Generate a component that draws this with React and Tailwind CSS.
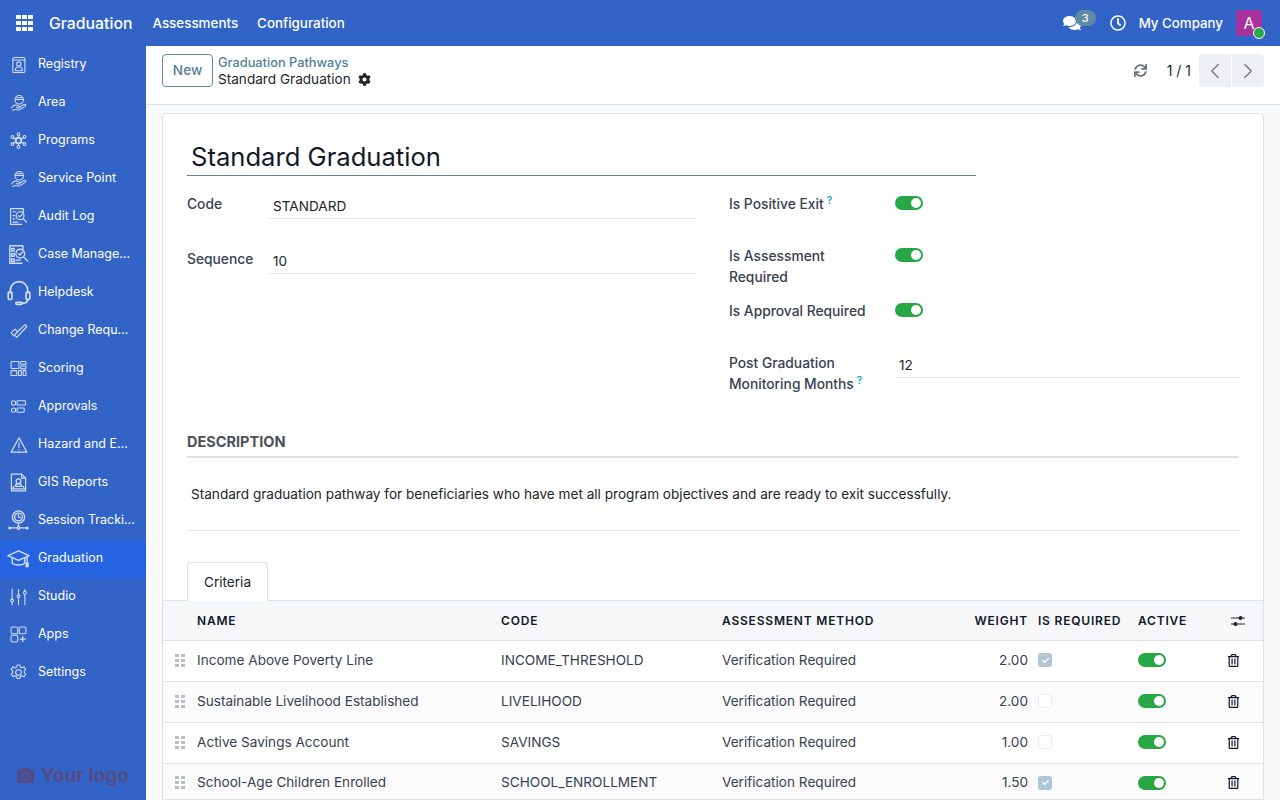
import { ChevronLeft, ChevronRight } from "lucide-react";
import { FaCamera, FaCheck, FaCog, FaComments, FaRegClock, FaRegTrashAlt, FaSync } from "react-icons/fa";

function Line({ w = 24, h = 24, children }) {
  return (
    <svg width={w} height={h} viewBox="0 0 24 24" fill="none" stroke="#d3dff7" strokeWidth="1.500" strokeLinecap="round" strokeLinejoin="round">
      {children}
    </svg>
  );
}

const HandIcon = () => (
  <Line w={17} h={18}>
    <circle cx="13" cy="7.500" r="6" />
    <path d="M7.500 7h11M9 4.500h8" />
    <path d="M2 19c2-3 4-5 7-4l4 1.500c2 .5 1.500 3-1 2.500l-3-.5M15 17l5-3c2-1 3 1 1.500 2.500L15 21c-3 1.500-6 1-8 0l-3 1.500" />
  </Line>
);

const icons = {
  Registry: (
    <Line w={17} h={18}>
      <rect x="4" y="1.500" width="17" height="21" rx="1.500" />
      <path d="M4 5h17" />
      <circle cx="12.500" cy="10.500" r="3" />
      <path d="M7.500 20c0-4 2-5.500 5-5.500s5 1.500 5 5.500z" />
    </Line>
  ),
  Area: <HandIcon />,
  Programs: (
    <Line w={17} h={17}>
      <circle cx="12" cy="12" r="4" strokeWidth="2.500" />
      <circle cx="12" cy="3" r="2" />
      <circle cx="12" cy="21" r="2" />
      <circle cx="3.500" cy="7" r="2" />
      <circle cx="20.500" cy="7" r="2" />
      <circle cx="3.500" cy="17" r="2" />
      <circle cx="20.500" cy="17" r="2" />
      <path d="M12 5v3M12 16v3M5 8l4 2M19 8l-4 2M5 16l4-2M19 16l-4-2" />
    </Line>
  ),
  "Service Point": <HandIcon />,
  "Audit Log": (
    <Line w={19} h={19}>
      <path d="M18 7V2H2v20h14" />
      <path d="M5 6h3M5 11h2M5 15h2M5 19h6" />
      <circle cx="14" cy="11" r="5" />
      <path d="M12 11l1.500 1.500L17 9M18 15l4 4" />
    </Line>
  ),
  "Case Management": (
    <Line w={21} h={21}>
      <path d="M17 6V2H2v20h14" />
      <rect x="4" y="5" width="3" height="3" />
      <rect x="4" y="11" width="3" height="3" />
      <rect x="4" y="17" width="3" height="3" />
      <path d="M9 18.500h5" />
      <circle cx="14" cy="11" r="5" />
      <path d="M12 11l1.500 1.500L17 9M18 15l4.500 4.500" />
    </Line>
  ),
  Helpdesk: (
    <Line w={26} h={26}>
      <path d="M4 12V9.500a8 8 0 0 1 16 0V12" />
      <rect x="2" y="11" width="3.500" height="7" rx="1.700" />
      <rect x="18.500" y="11" width="3.500" height="7" rx="1.700" />
      <path d="M20 18c0 2.500-2 3.500-5 3.500" />
      <rect x="9" y="20.500" width="6" height="2" rx="1" />
    </Line>
  ),
  "Change Requests": (
    <Line w={18} h={18}>
      <path d="M1.500 14.500l5-5 3.500 3.500-5 5.500zM10 13L20 3.500l2.500 2.500L9 20.500l-2-2" />
    </Line>
  ),
  Scoring: (
    <Line w={17} h={17}>
      <rect x="1.500" y="2" width="11" height="10" rx="1" />
      <rect x="15" y="2" width="7.500" height="4" rx="1" />
      <rect x="15" y="8.500" width="7.500" height="4" rx="1" />
      <rect x="1.500" y="15" width="8" height="7" rx="1" />
      <rect x="12" y="15" width="4" height="7" rx="1" />
      <rect x="18.500" y="15" width="4" height="7" rx="1" />
    </Line>
  ),
  Approvals: (
    <Line w={17} h={17}>
      <circle cx="5" cy="7" r="3" />
      <circle cx="5" cy="17" r="3" />
      <rect x="10" y="4" width="12" height="6" rx="1" />
      <rect x="10" y="14" width="10" height="6" rx="1" />
    </Line>
  ),
  "Hazard and Emergency": (
    <Line w={18} h={18}>
      <path d="M12 2.500L1.500 21.500h21z" />
      <path d="M12 9v6.500M12 18v.5" />
    </Line>
  ),
  "GIS Reports": (
    <Line w={19} h={23}>
      <path d="M3 1.500h13l5 5v16H3z" />
      <path d="M16 1.500v5h5" />
      <circle cx="12" cy="10.500" r="3" />
      <path d="M8 17c0-2.500 1.500-3.500 4-3.500s4 1 4 3.500zM6 17l-1.500 3h15L18 17" />
    </Line>
  ),
  "Session Tracking": (
    <Line w={21} h={23}>
      <circle cx="12" cy="8" r="7" />
      <circle cx="12" cy="8" r="4.500" />
      <path d="M12 5.500V8l2 1M12 15v4" />
      <path d="M2 20.500h20" />
      <circle cx="2" cy="20.500" r="1" fill="#d3dff7" />
      <circle cx="12" cy="20.500" r="1.500" fill="#3263c6" />
      <circle cx="22" cy="20.500" r="1" fill="#d3dff7" />
    </Line>
  ),
  Graduation: (
    <Line w={23} h={23}>
      <path d="M12 4L1 9l11 5 11-5z" />
      <path d="M5.500 11.500V17c3 2.500 10 2.500 13 0v-5.500M21 10v7" />
      <rect x="20" y="17" width="2" height="3.500" fill="#d3dff7" />
    </Line>
  ),
  Studio: (
    <Line w={17} h={18}>
      <path d="M3 1v14M3 19v4M12 1v8M12 13v10M21 1v3M21 8v15" />
      <circle cx="3" cy="17" r="2" />
      <circle cx="12" cy="11" r="2" />
      <circle cx="21" cy="6" r="2" />
    </Line>
  ),
  Apps: (
    <Line w={17} h={17}>
      <rect x="1.500" y="1.500" width="9.500" height="9.500" rx="2" />
      <rect x="13" y="1.500" width="9.500" height="9.500" rx="2" />
      <rect x="1.500" y="13" width="9.500" height="9.500" rx="2" />
      <path d="M18 15v7M14.500 18.500h7" strokeWidth="1.800" />
    </Line>
  ),
  Settings: (
    <Line w={17} h={17}>
      <path d="M10 1.500h4l.7 3 2.300 1 2.700-1.500 2.500 3.500-2 2.200v2.600l2 2.200-2.500 3.500-2.700-1.500-2.300 1-.7 3h-4l-.7-3-2.300-1-2.700 1.500-2.500-3.500 2-2.200v-2.600l-2-2.200L4.300 4 7 5.500l2.300-1z" />
      <circle cx="12" cy="12" r="4" />
    </Line>
  ),
};

const menu = Object.keys(icons);

const criteria = [
  { name: "Income Above Poverty Line", code: "INCOME_THRESHOLD", weight: "2.00", required: true, height: "h-[41px]" },
  { name: "Sustainable Livelihood Established", code: "LIVELIHOOD", weight: "2.00", required: false, height: "h-[41px]" },
  { name: "Active Savings Account", code: "SAVINGS", weight: "1.00", required: false, height: "h-[41px]" },
  { name: "School-Age Children Enrolled", code: "SCHOOL_ENROLLMENT", weight: "1.50", required: true, height: "h-[40px]" },
];

const tableCols = "grid grid-cols-[34px_304px_221px_216px_90px_10px_90px_10px_1fr] items-center";

function Toggle() {
  return (
    <span className="flex h-[14px] w-[28px] items-center justify-end rounded-full bg-[#28a745] pr-[2px]">
      <span className="h-[10px] w-[10px] rounded-full bg-white" />
    </span>
  );
}

function Help() {
  return <sup className="ml-[3px] text-[10px] font-semibold text-[#17a2b8]">?</sup>;
}

function DragHandle() {
  return (
    <span className="ml-[12px] grid w-[10px] grid-cols-2 gap-[2px]">
      {[0, 1, 2, 3, 4, 5].map((i) => (
        <span key={i} className="h-[3px] w-[4px] bg-[#b9bec6]" />
      ))}
    </span>
  );
}

export default function App() {
  return (
    <div className="flex h-screen w-[1280px] flex-col overflow-hidden bg-[#f9fafb] font-['Inter',sans-serif] text-[13.6px] text-[#374151]">
      <header className="flex h-[46px] shrink-0 items-center bg-[#3263c6] text-white">
        <div className="ml-[16px] grid w-[17px] grid-cols-3 gap-[1.500px]">
          {[0, 1, 2, 3, 4, 5, 6, 7, 8].map((i) => (
            <span key={i} className="h-[4.500px] w-[4.500px] bg-white" />
          ))}
        </div>
        <span className="ml-[16px] mt-[1px] text-[15.800px] font-medium">Graduation</span>
        <span className="ml-[20px] text-[13.400px] font-medium">Assessments</span>
        <span className="ml-[19px] text-[13.400px] font-medium">Configuration</span>
        <div className="ml-auto flex items-center">
          <span className="relative flex h-[46px] w-[34px] items-center">
            <FaComments size={18} />
            <span className="absolute left-[12px] top-[10px] flex h-[16px] w-[21px] items-center justify-center rounded-full bg-[#5f8aa5] text-[11px] font-medium">3</span>
          </span>
          <FaRegClock size={16} className="ml-[13px]" />
          <span className="ml-[13px] mt-[1px] text-[13.300px] font-medium">My Company</span>
          <span className="relative ml-[13px] mr-[18px] flex h-[26px] w-[26px] items-center justify-center rounded-[3px] bg-[#a8329d] text-[16px]">
            A
            <span className="absolute -bottom-[3px] -right-[3px] h-[12px] w-[12px] rounded-full border border-white bg-[#28a745]" />
          </span>
        </div>
      </header>

      <div className="flex min-h-0 flex-1">
        <aside className="relative flex w-[146px] shrink-0 flex-col bg-[#3263c6]">
          {menu.map((label) => (
            <div key={label} className={`flex h-[38px] shrink-0 items-center ${label === "Graduation" ? "bg-[#2563e0]" : ""}`}>
              <span className="flex w-[38px] shrink-0 justify-center pr-[1px] pb-[1px]">{icons[label]}</span>
              <span className="mb-[2px] truncate pr-[11px] text-[12.500px] text-white">{label}</span>
            </div>
          ))}
          <div className="absolute bottom-[15px] left-[17px] flex items-center gap-[7px] text-[19px] font-bold leading-none text-[#544a86]">
            <FaCamera size={17} />
            <span>Your logo</span>
          </div>
        </aside>

        <main className="flex min-w-0 flex-1 flex-col">
          <div className="flex h-[59px] shrink-0 items-start border-b border-[#dee2e6] bg-white pl-[16px] pr-[16px] pt-[8px]">
            <button className="h-[33px] w-[51px] rounded-[4px] border border-[#5b8ea6] font-medium text-[#4f8098]">New</button>
            <div className="ml-[5px] flex flex-col">
              <span className="text-[12.800px] font-medium leading-[17px] text-[#51819a]">Graduation Pathways</span>
              <span className="flex items-center gap-[7px] leading-[16px] text-[#212529]">
                Standard Graduation
                <FaCog size={13} />
              </span>
            </div>
            <div className="ml-auto flex items-center">
              <FaSync size={13} className="text-[#6b7280]" />
              <span className="ml-[20px] mr-[1px] text-[14px] text-[#212529]">1 / 1</span>
              <div className="ml-[7px] flex h-[33px] gap-[1px]">
                <span className="flex w-[32px] items-center justify-center rounded-l-[4px] bg-[#eeeff2] text-[#6b7280]">
                  <ChevronLeft size={26} strokeWidth={1.100} />
                </span>
                <span className="flex w-[32px] items-center justify-center rounded-r-[4px] bg-[#eeeff2] text-[#6b7280]">
                  <ChevronRight size={26} strokeWidth={1.100} />
                </span>
              </div>
            </div>
          </div>

          <div className="mx-[16px] mt-[8px] flex-1 overflow-hidden rounded-t-[4px] border border-[#dee2e6] bg-white">
            <div className="px-[24px] pt-[24px]">
              <h1 className="w-[789px] border-b border-[#5f7f90] pl-[4px] pt-[1px] text-[25.600px] leading-[36px] text-[#111827]">Standard Graduation</h1>

              <div className="grid grid-cols-[510px_510px] gap-x-[32px] text-[13.800px]">
                <div>
                  <div className="mt-[19px] flex items-start">
                    <span className="mt-[1px] w-[82px] font-medium leading-[17px]">Code</span>
                    <span className="h-[24px] flex-1 border-b border-[#e5e7eb] pl-[4px] pt-[3px] text-[13.600px] leading-[17px] text-[#212529]">STANDARD</span>
                  </div>
                  <div className="mt-[31px] flex items-start">
                    <span className="mt-[1px] w-[82px] font-medium leading-[17px]">Sequence</span>
                    <span className="h-[24px] flex-1 border-b border-[#e5e7eb] pl-[4px] pt-[3px] text-[13.600px] leading-[17px] text-[#212529]">10</span>
                  </div>
                </div>
                <div>
                  <div className="mt-[20px] flex h-[42px] items-start">
                    <span className="w-[166px] font-medium leading-[17px]">
                      Is Positive Exit
                      <Help />
                    </span>
                    <Toggle />
                  </div>
                  <div className="mt-[10px] flex h-[45px] items-start">
                    <span className="-mt-[2px] w-[166px] pr-[40px] font-medium leading-[21px]">Is Assessment Required</span>
                    <Toggle />
                  </div>
                  <div className="mt-[10px] flex h-[42px] items-start">
                    <span className="w-[166px] font-medium leading-[17px]">Is Approval Required</span>
                    <Toggle />
                  </div>
                  <div className="mt-[9px] flex items-start">
                    <span className="-mt-[1px] mb-[-1px] w-[166px] pr-[20px] font-medium leading-[21px]">
                      Post Graduation Monitoring Months
                      <Help />
                    </span>
                    <span className="h-[24px] flex-1 border-b border-[#e5e7eb] pl-[4px] pt-[3px] text-[13.600px] leading-[17px] text-[#212529]">12</span>
                  </div>
                </div>
              </div>

              <h2 className="mt-[39px] border-b-2 border-[#dee2e6] pb-[6px] text-[14.500px] font-bold uppercase leading-[17px] text-[#4b5158]">Description</h2>
              <p className="border-b border-[#e5e7eb] pb-[27px] pl-[4px] pt-[28px] leading-[17px] text-[#212529]">
                Standard graduation pathway for beneficiaries who have met all program objectives and are ready to exit successfully.
              </p>

              <div className="mt-[31px] flex">
                <span className="-mb-[1px] flex h-[39px] w-[81px] items-center justify-center rounded-t-[4px] border border-b-0 border-[#dee2e6] bg-white text-[#212529]">Criteria</span>
              </div>
            </div>

            <div className={`${tableCols} h-[41px] border-y border-[#dee2e6] bg-[#f6f7f9] text-[12px] font-semibold tracking-[0.8px] text-[#111827]`}>
              <span />
              <span>NAME</span>
              <span>CODE</span>
              <span>ASSESSMENT METHOD</span>
              <span className="text-right">WEIGHT</span>
              <span />
              <span>IS REQUIRED</span>
              <span />
              <span className="flex items-center justify-between pr-[17px]">
                <span>ACTIVE</span>
                <svg width="16" height="14" viewBox="0 0 16 14" fill="#212529">
                  <rect x="1" y="3.500" width="14" height="1" />
                  <rect x="1" y="9.500" width="14" height="1" />
                  <circle cx="10.500" cy="4" r="2" />
                  <circle cx="5.500" cy="10" r="2" />
                </svg>
              </span>
            </div>

            {criteria.map((row, i) => (
              <div key={row.code} className={`${tableCols} ${row.height} border-b border-[#dee2e6] pb-[2px] text-[#374151] ${i % 2 === 1 ? "bg-[#fbfbfc]" : "bg-white"}`}>
                <DragHandle />
                <span>{row.name}</span>
                <span>{row.code}</span>
                <span>Verification Required</span>
                <span className="text-right">{row.weight}</span>
                <span />
                <span className="flex">
                  {row.required ? (
                    <span className="flex h-[14px] w-[14px] items-center justify-center rounded-[3px] bg-[#aec6d6] text-white">
                      <FaCheck size={7} />
                    </span>
                  ) : (
                    <span className="h-[14px] w-[14px] rounded-[3px] border border-[#e9ecef] bg-white" />
                  )}
                </span>
                <span />
                <span className="flex items-center justify-between pr-[23px]">
                  <Toggle />
                  <FaRegTrashAlt size={13} className="text-[#111827]" />
                </span>
              </div>
            ))}
          </div>
        </main>
      </div>
    </div>
  );
}
